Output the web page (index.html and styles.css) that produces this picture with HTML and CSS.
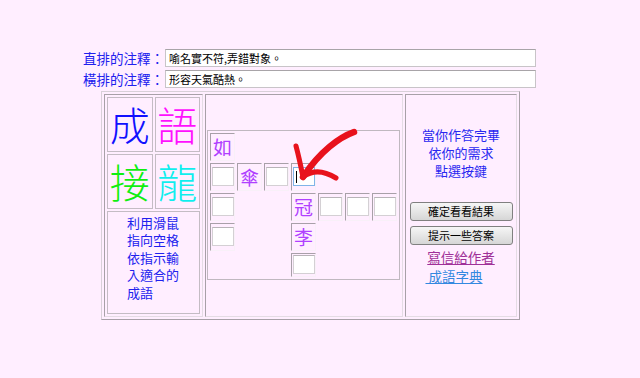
FILE: index.html
```html
<!DOCTYPE html>
<html lang="zh-Hant">

<head>
  <meta charset="UTF-8">
  <meta name="viewport" content="width=device-width, initial-scale=1.0">
  <link rel="stylesheet" href="styles.css">
  <title>成語接龍</title>
</head>

<body>
  <div class="page">
    <div class="notes">
      <div class="note-row">
        <span class="note-label">直排的注釋：</span>
        <div class="note-box">喻名實不符,弄錯對象。</div>
      </div>
      <div class="note-row">
        <span class="note-label">橫排的注釋：</span>
        <div class="note-box">形容天氣酷熱。</div>
      </div>
    </div>

    <div class="board">
      <div class="cell side">
        <div class="title-grid">
          <div class="big c-blue">成</div>
          <div class="big c-pink">語</div>
          <div class="big c-green">接</div>
          <div class="big c-cyan">龍</div>
          <div class="howto">利用滑鼠<br>指向空格<br>依指示輸<br>入適合的<br>成語</div>
        </div>
      </div>

      <div class="cell middle">
        <div class="puzzle">
          <div class="sq" style="grid-area: 1 / 1">如</div>
          <div class="sq" style="grid-area: 2 / 1"><span class="box"></span></div>
          <div class="sq" style="grid-area: 2 / 2">傘</div>
          <div class="sq" style="grid-area: 2 / 3"><span class="box"></span></div>
          <div class="sq" style="grid-area: 2 / 4"><span class="box focus"><i class="caret"></i></span></div>
          <div class="sq" style="grid-area: 3 / 1"><span class="box"></span></div>
          <div class="sq" style="grid-area: 3 / 4">冠</div>
          <div class="sq" style="grid-area: 3 / 5"><span class="box"></span></div>
          <div class="sq" style="grid-area: 3 / 6"><span class="box"></span></div>
          <div class="sq" style="grid-area: 3 / 7"><span class="box"></span></div>
          <div class="sq" style="grid-area: 4 / 1"><span class="box"></span></div>
          <div class="sq" style="grid-area: 4 / 4">李</div>
          <div class="sq" style="grid-area: 5 / 4"><span class="box"></span></div>
        </div>
        <svg class="arrow" width="197" height="221" viewBox="0 0 197 221">
          <path d="M148 37 C134 42 114 56 97 82" fill="none" stroke="#e8121c" stroke-width="6.5" stroke-linecap="round"/>
          <path d="M90 51 C93 62 95 72 97 82" fill="none" stroke="#e8121c" stroke-width="5" stroke-linecap="round"/>
          <path d="M97 82 C106 75 117 75 130 83" fill="none" stroke="#e8121c" stroke-width="5" stroke-linecap="round"/>
        </svg>
      </div>

      <div class="cell actions">
        <p class="tip">當你作答完畢<br>依你的需求<br>點選按鍵</p>
        <button class="btn">確定看看結果</button>
        <button class="btn">提示一些答案</button>
        <a class="link visited" href="#">寫信給作者</a>
        <a class="link" href="#">&nbsp;成語字典</a>
      </div>
    </div>
  </div>
</body>

</html>
```

FILE: styles.css
```css
body {
  margin: 0;
  background-color: #ffeeff;
  font-family: "Noto Sans CJK TC", "Liberation Sans", sans-serif;
}

.page {
  margin-left: 83px;
  padding-top: 49px;
}

.notes {
  width: 453px;
  display: flex;
  flex-direction: column;
  gap: 3px;
}

.note-row {
  display: flex;
  align-items: center;
}

.note-label {
  width: 82px;
  font-size: 13.5px;
  line-height: 18px;
  color: #2020ee;
  white-space: nowrap;
}

.note-box {
  flex: 1;
  height: 18px;
  box-sizing: border-box;
  background: #fff;
  border: 1px solid #c8c4c8;
  border-top-color: #a8a4a8;
  padding-left: 3px;
  font-size: 11px;
  line-height: 16px;
  color: #000;
}

.board {
  margin-left: 18px;
  margin-top: 3px;
  width: 419px;
  height: 229px;
  box-sizing: border-box;
  border: 1px solid;
  border-color: #d8d0d8 #a8a0a8 #a8a0a8 #d8d0d8;
  padding: 2px;
  display: flex;
  gap: 2px;
}

.cell {
  border: 1px solid;
  border-color: #a8a0a8 #e4dce4 #e4dce4 #a8a0a8;
  box-sizing: border-box;
}

.side {
  width: 99px;
  padding: 1px;
}

.title-grid {
  height: 100%;
  box-sizing: border-box;
  padding: 1px;
  display: grid;
  grid-template-columns: 1fr 1fr;
  grid-template-rows: 55px 55px 1fr;
  gap: 2px;
}

.big {
  border: 1px solid #c4bcc4;
  font-size: 40px;
  font-weight: 300;
  line-height: 53px;
  text-align: center;
}

.c-blue { color: #1010ff; }
.c-pink { color: #ff10ff; }
.c-green { color: #10ee10; }
.c-cyan { color: #10eeee; }

.howto {
  grid-column: 1 / 3;
  border: 1px solid #c4bcc4;
  padding: 2px 0 0 19px;
  font-size: 13px;
  line-height: 17.4px;
  color: #2020ee;
}

.middle {
  width: 198px;
  position: relative;
  display: flex;
  align-items: center;
  padding-bottom: 2px;
}

.puzzle {
  border: 1px solid #c0b8c0;
  padding: 2px;
  display: grid;
  grid-template-columns: repeat(7, 25px);
  grid-template-rows: 28px 28px 28px 28px 24px;
  gap: 2px;
  margin-left: 1px;
}

.sq {
  border: 1px solid;
  border-color: #a8a0a8 #f8f0f8 #f8f0f8 #a8a0a8;
  display: flex;
  align-items: center;
  justify-content: center;
  font-size: 19px;
  color: #b040ff;
  line-height: 1;
}

.box {
  width: 22px;
  height: 19px;
  box-sizing: border-box;
  background: #fff;
  border: 1px solid #d4d0d4;
  border-top-color: #b8b4b8;
  display: flex;
  align-items: center;
  padding-left: 2px;
}

.box.focus {
  border-color: #80b4e8;
}

.caret {
  width: 1px;
  height: 12px;
  background: #000;
}

.arrow {
  position: absolute;
  left: 0;
  top: 0;
}

.actions {
  width: 112px;
  display: flex;
  flex-direction: column;
  align-items: center;
}

.tip {
  margin: 31px 0 0;
  font-size: 13px;
  line-height: 18px;
  color: #2828f0;
  text-align: center;
}

.btn {
  width: 103px;
  height: 19px;
  padding: 0;
  border: 1px solid #808080;
  border-radius: 3px;
  background: linear-gradient(#f6f6f6, #d6d6d6);
  font-family: inherit;
  font-size: 11px;
  line-height: 17px;
  color: #000;
}

.btn + .btn {
  margin-top: 5px;
}

.tip + .btn {
  margin-top: 22px;
}

.link {
  font-size: 13.5px;
  line-height: 19px;
  color: #3388e0;
  text-decoration: underline;
  white-space: nowrap;
  margin-left: -14px;
}

.link.visited {
  color: #a03098;
  margin-top: 3px;
  margin-left: 0;
}
```
